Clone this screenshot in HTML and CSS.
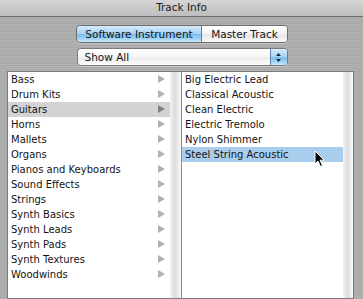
FILE: index.html
```html
<!DOCTYPE html>
<html>
<head>
<meta charset="utf-8">
<link rel="stylesheet" href="styles.css">
</head>
<body>
<div class="window">
  <div class="titlebar">Track Info</div>
  <div class="controls">
    <div class="segmented">
      <div class="seg seg-on">Software Instrument</div>
      <div class="seg">Master Track</div>
    </div>
    <div class="popup">
      <span class="popup-label">Show All</span>
      <span class="popup-arrows">
        <svg width="7" height="11" viewBox="0 0 7 11"><path d="M3.5 1 L6 4 L1 4 Z M3.5 10 L6 7 L1 7 Z" fill="#1a2a3a"/></svg>
      </span>
    </div>
  </div>
  <div class="browser">
    <div class="col col-left">
      <ul class="list">
        <li>Bass<i class="tri"></i></li>
        <li>Drum Kits<i class="tri"></i></li>
        <li class="sel-gray">Guitars<i class="tri"></i></li>
        <li>Horns<i class="tri"></i></li>
        <li>Mallets<i class="tri"></i></li>
        <li>Organs<i class="tri"></i></li>
        <li>Pianos and Keyboards<i class="tri"></i></li>
        <li>Sound Effects<i class="tri"></i></li>
        <li>Strings<i class="tri"></i></li>
        <li>Synth Basics<i class="tri"></i></li>
        <li>Synth Leads<i class="tri"></i></li>
        <li>Synth Pads<i class="tri"></i></li>
        <li>Synth Textures<i class="tri"></i></li>
        <li>Woodwinds<i class="tri"></i></li>
      </ul>
      <div class="gutter"></div>
    </div>
    <div class="col col-right">
      <ul class="list">
        <li>Big Electric Lead</li>
        <li>Classical Acoustic</li>
        <li>Clean Electric</li>
        <li>Electric Tremolo</li>
        <li>Nylon Shimmer</li>
        <li class="sel-blue">Steel String Acoustic</li>
      </ul>
      <div class="gutter"></div>
    </div>
  </div>
  <svg class="cursor" width="12" height="18" viewBox="0 0 12 18">
    <path d="M1 1 L1 14 L4 11 L6.5 16.5 L8.5 15.6 L6 10.2 L10.2 10.2 Z" fill="#000" stroke="#fff" stroke-width="1" stroke-linejoin="round"/>
  </svg>
</div>
</body>
</html>
```

FILE: styles.css
```css
* { box-sizing: border-box; }
html, body { margin: 0; padding: 0; }
body {
  width: 363px;
  height: 299px;
  overflow: hidden;
  font-family: "DejaVu Sans", sans-serif;
  color: #141414;
}
.window {
  position: relative;
  width: 363px;
  height: 299px;
  background-color: #adadad;
  background-image: repeating-linear-gradient(to bottom, rgba(255,255,255,0.06) 0, rgba(255,255,255,0.06) 1px, rgba(0,0,0,0.03) 1px, rgba(0,0,0,0.03) 2px);
  display: flex;
  flex-direction: column;
}
.titlebar {
  height: 17px;
  border-bottom: 1px solid #6e6e6e;
  background: linear-gradient(to bottom, #d6d6d6, #bdbdbd);
  text-align: center;
  font-size: 10.5px;
  line-height: 15px;
  color: #1a1a1a;
}
.controls {
  display: flex;
  flex-direction: column;
  align-items: center;
  gap: 5px;
  padding-top: 8px;
  padding-left: 1px;
}
.segmented {
  display: flex;
  width: 212px;
  height: 18px;
  border: 1px solid #6d6d6d;
  border-radius: 4px;
  overflow: hidden;
  font-size: 10.5px;
  box-shadow: 0 1px 0 rgba(255,255,255,0.35);
}
.seg {
  line-height: 16px;
  text-align: center;
  background: linear-gradient(to bottom, #ffffff 0%, #f4f4f4 50%, #e6e6e6 55%, #fbfbfb 100%);
  flex: 1;
}
.seg-on {
  flex: 0 0 125px;
  border-right: 1px solid #5a7fa8;
  background: linear-gradient(to bottom, #d7ecfb 0%, #a9d3f3 48%, #7cbdee 52%, #9fd2f6 80%, #c9e9fc 100%);
}
.popup {
  position: relative;
  display: flex;
  width: 211px;
  height: 18px;
  border: 1px solid #7a7a7a;
  border-radius: 4px;
  overflow: hidden;
  background: linear-gradient(to bottom, #ffffff 0%, #f5f5f5 50%, #ebebeb 55%, #fcfcfc 100%);
  font-size: 10.5px;
  box-shadow: 0 1px 0 rgba(255,255,255,0.35);
}
.popup-label {
  flex: 1;
  padding-left: 7px;
  line-height: 16px;
}
.popup-arrows {
  width: 17px;
  display: flex;
  align-items: center;
  justify-content: center;
  border-left: 1px solid #5a7fa8;
  background: linear-gradient(to bottom, #d7ecfb 0%, #a9d3f3 48%, #7cbdee 52%, #9fd2f6 80%, #c9e9fc 100%);
}
.browser {
  margin: 5px 0 0 7px;
  width: 347px;
  height: 228px;
  border: 1px solid #7c7c7c;
  display: flex;
  background: #fff;
}
.col {
  display: flex;
  height: 100%;
}
.col-left {
  width: 174px;
  border-right: 1px solid #8a8a8a;
}
.col-right {
  flex: 1;
}
.col-left .list { width: 162px; }
.col-right .list { width: 161px; }
.gutter {
  flex: 1;
  background: linear-gradient(to right, #f4f4f4 0%, #dcdcdc 45%, #ececec 75%, #fafafa 100%);
}
.list {
  list-style: none;
  margin: 0;
  padding: 0;
  font-size: 10px;
}
.list li {
  position: relative;
  height: 15px;
  line-height: 15px;
  padding-left: 3px;
  white-space: nowrap;
}
.tri {
  position: absolute;
  right: 5px;
  top: 3px;
  width: 0;
  height: 0;
  border-left: 7px solid #b0b0b0;
  border-top: 4px solid transparent;
  border-bottom: 4px solid transparent;
}
.sel-gray { background: #d3d3d3; }
.sel-gray .tri { border-left-color: #808080; }
.sel-blue { background: #a9cdec; }
.cursor {
  position: absolute;
  left: 314px;
  top: 150px;
}
```
